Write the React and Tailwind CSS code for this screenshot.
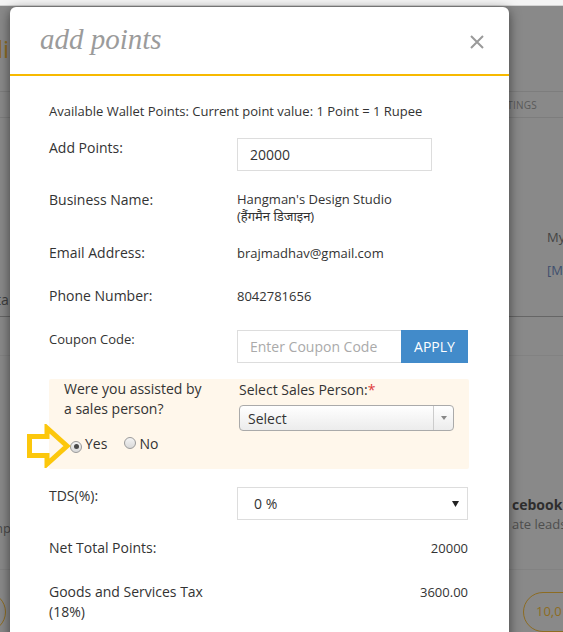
import React from 'react';

const font = { fontFamily: '"Open Sans", "Noto Sans", "DejaVu Sans", sans-serif' };

const Radio = ({ checked }) => (
  <span className="inline-flex h-[12px] w-[12px] items-center justify-center rounded-full border border-[#9a9a9a] bg-gradient-to-b from-[#f4f4f4] to-[#d9d9d9]">
    {checked && <span className="h-[5px] w-[5px] rounded-full bg-[#4a4a4a]" />}
  </span>
);

const Backdrop = () => (
  <div className="flex h-full w-full flex-col">
    <div className="h-[6px] bg-[#f4f4f4] border-b border-[#d4d4d4]" />
    {/* page header */}
    <div className="flex h-[85px] items-start pt-[28px]">
      <span className="-ml-[3px] text-[24px] leading-[30px] text-[#8d6c22]">li</span>
    </div>
    {/* tab row */}
    <div className="flex h-[28px] items-center justify-end border-y border-[#7d7d7d] pt-[3px] pr-[26px] text-[10px] tracking-wide text-[#5a5a5a]">
      SETTINGS
    </div>
    <div className="flex h-[199px] justify-between">
      <div className="flex flex-col justify-end pb-[6px]">
        <span className="-ml-[4px] text-[14px] text-[#3e3e3e]">ta</span>
      </div>
      <div className="flex flex-col pt-[110px] pr-0 text-[13px] w-[16px]">
        <span className="text-[#444]">My</span>
        <span className="mt-[13px] text-[#3f4f6e]">[M</span>
      </div>
    </div>
    <div className="h-[40px] border-t border-[#666] border-b border-b-[#828282]" />
    <div className="flex h-[214px] justify-between pt-[138px]">
      <div className="flex flex-col pt-[25px]">
        <span className="-ml-[5px] text-[13px] text-[#4a4a4a]">np</span>
      </div>
      <div className="flex w-[51px] flex-col">
        <span className="whitespace-nowrap text-[14px] font-bold text-[#2e2e2e]">cebook L</span>
        <span className="whitespace-nowrap text-[13px] text-[#4e4e4e]">ate leads f</span>
      </div>
    </div>
    <div className="border-t border-[#828282] flex justify-between pt-[22px]">
      <div className="-ml-[34px] h-[40px] w-[40px] rounded-full border border-[#8d6c22]" />
      <div className="-mr-[20px] flex h-[40px] w-[60px] items-center rounded-full border border-[#8d6c22] pl-[12px] text-[13px] text-[#8d6c22]">
        10,0
      </div>
    </div>
  </div>
);

const Row = ({ label, children, className = '' }) => (
  <div className={`flex items-start ${className}`}>
    <div className="w-[188px] shrink-0 text-[14px] leading-[20px] text-[#333]">{label}</div>
    <div className="flex-1">{children}</div>
  </div>
);

export default function App() {
  return (
    <div className="relative h-[632px] w-[563px] overflow-hidden bg-[#898989]" style={font}>
      <Backdrop />

      {/* modal */}
      <div className="absolute left-[10px] top-[7px] w-[499px] rounded-t-[6px] bg-white shadow-[0_3px_12px_rgba(0,0,0,0.55)]">
        <div className="flex h-[69px] items-start justify-between border-b-2 border-[#f7b900] pl-[30px] pr-[25px]">
          <h1
            className="pt-[14px] text-[29px] italic leading-[36px] text-[#9b9b9b]"
            style={{ fontFamily: '"Liberation Serif", serif' }}
          >
            add points
          </h1>
          <button className="mt-[28px] p-0">
            <svg width="14" height="14" viewBox="0 0 14 14">
              <path d="M1 1 L13 13 M13 1 L1 13" stroke="#9a9a9a" strokeWidth="2" />
            </svg>
          </button>
        </div>

        <div className="pl-[39px] pr-[41px] pt-[26px] pb-[40px]">
          <p className="text-[13px] leading-[18px] text-[#333]">
            Available Wallet Points: Current point value: 1 Point = 1 Rupee
          </p>

          <Row label="Add Points:" className="mt-[18px]">
            <div className="flex h-[33px] w-[195px] items-center border border-[#ddd] px-[12px] text-[14px] text-[#333]">
              20000
            </div>
          </Row>

          <Row label="Business Name:" className="mt-[19px]">
            <div className="pt-[1px] text-[13px] leading-[17px] text-[#333]">
              <div>Hangman's Design Studio</div>
              <div>(हैंगमैन डिजाइन)</div>
            </div>
          </Row>

          <Row label="Email Address:" className="mt-[18px]">
            <div className="text-[13px] leading-[20px] text-[#333]">brajmadhav@gmail.com</div>
          </Row>

          <Row label="Phone Number:" className="mt-[23px]">
            <div className="text-[13px] leading-[20px] text-[#333]">8042781656</div>
          </Row>

          <Row label={<span className="text-[13px]">Coupon Code:</span>} className="mt-[23px]">
            <div className="mt-[1px] flex h-[33px]">
              <div className="flex w-[164px] items-center border border-r-0 border-[#ddd] px-[12px] text-[14px] text-[#aaa]">
                Enter Coupon Code
              </div>
              <button className="w-[67px] bg-[#428bca] text-[14px] text-white">APPLY</button>
            </div>
          </Row>

          {/* sales person box */}
          <div className="mt-[16px] flex h-[90px] w-[420px] rounded-[2px] bg-[#fff7eb] pl-[15px]">
            <div className="w-[175px] shrink-0">
              <p className="text-[14px] leading-[20px] text-[#333]">
                Were you assisted by
                <br />a sales person?
              </p>
              <div className="mt-[15px] flex items-center text-[14px] leading-[20px] text-[#333]">
                <span className="ml-[6px] mr-[3px]">
                  <Radio checked />
                </span>
                Yes
                <span className="ml-[17px] mr-[3px]">
                  <Radio />
                </span>
                No
              </div>
            </div>
            <div className="w-[215px] pt-[1px]">
              <p className="text-[14px] leading-[20px] text-[#333]">
                Select Sales Person:<span className="text-[#e03a3a]">*</span>
              </p>
              <div className="mt-[5px] flex h-[26px] rounded-[4px] border border-[#aaa] bg-gradient-to-b from-white to-[#ececec]">
                <div className="flex flex-1 items-center pl-[8px] text-[14px] text-[#333]">Select</div>
                <div className="flex w-[20px] items-center justify-center border-l border-[#ccc]">
                  <svg width="6" height="4" viewBox="0 0 6 4">
                    <path d="M0 0 L6 0 L3 4 Z" fill="#888" />
                  </svg>
                </div>
              </div>
            </div>
          </div>

          <Row label="TDS(%):" className="mt-[17px]">
            <div className="mt-[1px] flex h-[33px] w-[231px] items-center justify-between border border-[#ddd] pl-[16px] pr-[8px] text-[14px] text-[#333]">
              <span>0 %</span>
              <svg width="7" height="6" viewBox="0 0 7 6">
                <path d="M0 0 L7 0 L3.5 6 Z" fill="#222" />
              </svg>
            </div>
          </Row>

          <Row label="Net Total Points:" className="mt-[18px]">
            <div className="text-right text-[13px] leading-[20px] text-[#333]">20000</div>
          </Row>

          <Row label={<>Goods and Services Tax<br />(18%)</>} className="mt-[24px]">
            <div className="text-right text-[13px] leading-[20px] text-[#333]">3600.00</div>
          </Row>
        </div>
      </div>

      {/* pointer arrow */}
      <svg className="absolute left-[25px] top-[424px]" width="46" height="44" viewBox="0 0 46 44">
        <path
          d="M4.5 12.5 H22 V4 L42 22 L22 40 V31.5 H4.5 Z"
          fill="none"
          stroke="#fcc70c"
          strokeWidth="5"
          strokeLinejoin="miter"
        />
      </svg>
    </div>
  );
}
